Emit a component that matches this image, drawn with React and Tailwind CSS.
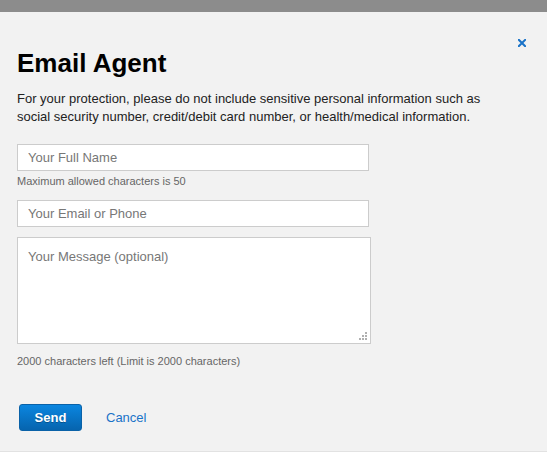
import React from "react";

export default function App() {
  const font = { fontFamily: '"Liberation Sans", Arial, sans-serif' };
  return (
    <div
      className="w-[547px] h-[452px] bg-[#f2f2f2] flex flex-col border-b border-[#e2e2e2] overflow-hidden"
      style={font}
    >
      <div className="h-[12px] bg-[#8c8c8c] shrink-0" />
      <div className="relative flex flex-col px-[17px]">
        <button
          type="button"
          aria-label="Close"
          className="absolute top-[27px] right-[21px] w-[8px] h-[8px] flex items-center justify-center"
        >
          <svg width="8" height="8" viewBox="0 0 8 8">
            <path d="M0.8 0.8 L7.2 7.2 M7.2 0.8 L0.8 7.2" stroke="#1a73c8" strokeWidth="2" strokeLinecap="square" />
          </svg>
        </button>

        <h1 className="mt-[36px] text-[26px] leading-[30px] font-bold text-black">Email Agent</h1>

        <p className="mt-[12px] w-[475px] text-[13px] leading-[18px] text-[#222]">
          For your protection, please do not include sensitive personal information such as
          social security number, credit/debit card number, or health/medical information.
        </p>

        <input
          type="text"
          placeholder="Your Full Name"
          className="mt-[18px] w-[352px] h-[27px] bg-white border border-[#cccccc] px-[10px] text-[13px] text-[#333] placeholder:text-[#777] outline-none"
          style={font}
        />
        <div className="mt-[3px] text-[11px] leading-[14px] text-[#666]">
          Maximum allowed characters is 50
        </div>

        <input
          type="text"
          placeholder="Your Email or Phone"
          className="mt-[12px] w-[352px] h-[27px] bg-white border border-[#cccccc] px-[10px] text-[13px] text-[#333] placeholder:text-[#777] outline-none"
          style={font}
        />

        <div className="relative mt-[10px] w-[354px] h-[107px]">
          <textarea
            placeholder="Your Message (optional)"
            className="w-full h-full bg-white border border-[#cccccc] px-[10px] pt-[10px] text-[13px] leading-[18px] text-[#333] placeholder:text-[#777] outline-none resize-none block"
            style={font}
          />
          <div className="absolute right-[4px] bottom-[4px] grid grid-cols-3 gap-[1px] pointer-events-none">
            <span className="w-[2px] h-[2px]" />
            <span className="w-[2px] h-[2px]" />
            <span className="w-[2px] h-[2px] bg-[#b0b0b0]" />
            <span className="w-[2px] h-[2px]" />
            <span className="w-[2px] h-[2px] bg-[#b0b0b0]" />
            <span className="w-[2px] h-[2px] bg-[#b0b0b0]" />
            <span className="w-[2px] h-[2px] bg-[#b0b0b0]" />
            <span className="w-[2px] h-[2px] bg-[#b0b0b0]" />
            <span className="w-[2px] h-[2px] bg-[#b0b0b0]" />
          </div>
        </div>

        <div className="mt-[10px] text-[11px] leading-[14px] text-[#666]">
          2000 characters left (Limit is 2000 characters)
        </div>

        <div className="mt-[36px] flex items-center pl-[2px] gap-[24px]">
          <button
            type="button"
            className="w-[63px] h-[27px] rounded-[3px] border border-[#0a62a8] bg-gradient-to-b from-[#0b86e0] to-[#0664ae] text-white text-[13px] font-bold [text-shadow:0_1px_0_rgba(0,0,0,0.25)]"
            style={font}
          >
            Send
          </button>
          <button type="button" className="text-[13px] text-[#1a73c8]" style={font}>
            Cancel
          </button>
        </div>
      </div>
    </div>
  );
}
